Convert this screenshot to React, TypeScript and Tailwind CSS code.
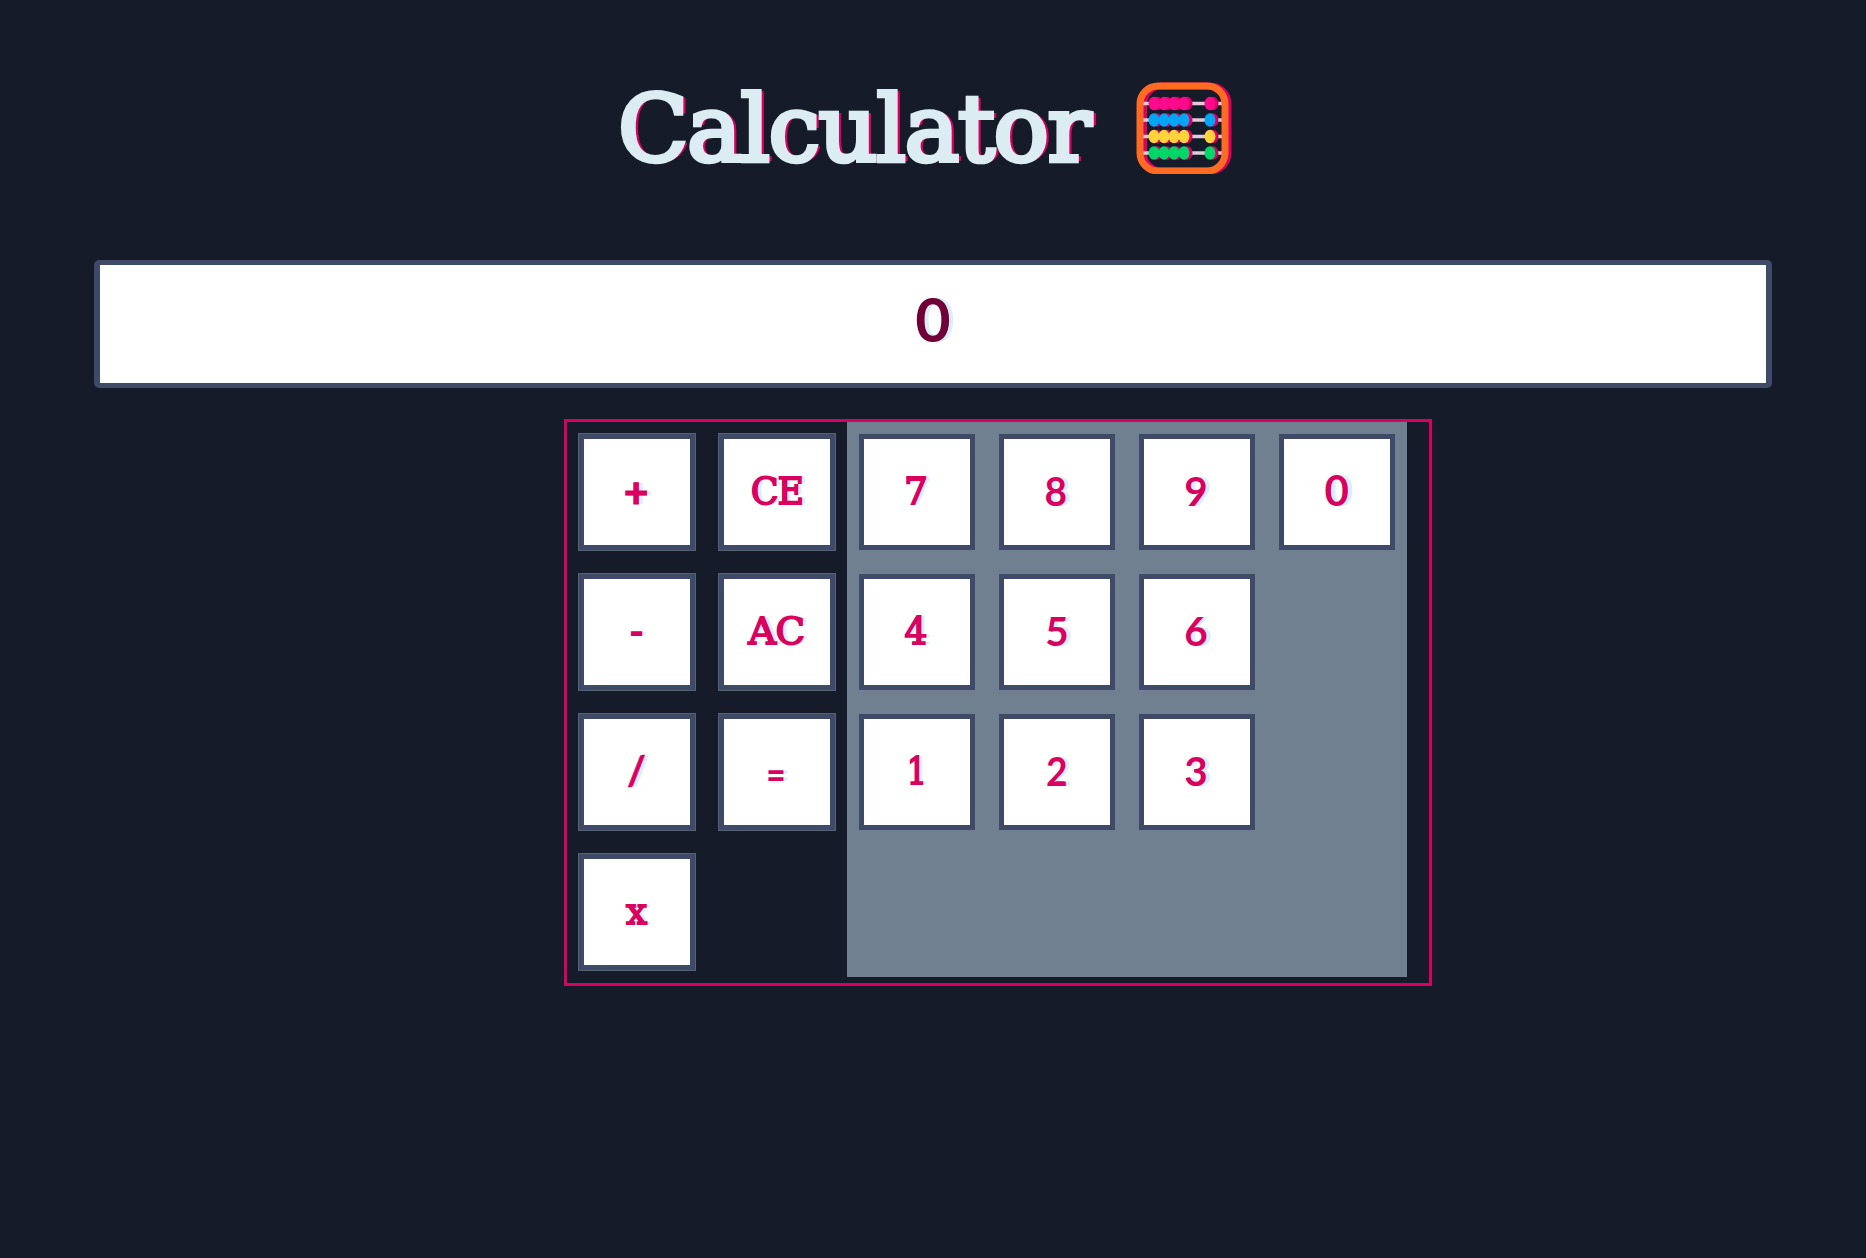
const SERIF = "font-['DejaVu_Serif',serif] text-[37.5px] [-webkit-text-stroke:1.8px_#da0060]";
const SANS = "font-['Lato',sans-serif] text-[40.5px] font-bold";

type Key = { label: string; look: string };

const operators: Key[] = [
  { label: '+', look: "font-['Lato',sans-serif] text-[42px] font-black -translate-y-px scale-x-[1.02] [-webkit-text-stroke:0.8px_#da0060]" },
  { label: 'CE', look: `${SERIF} tracking-[-1.2px] scale-x-[0.97]` },
  { label: '-', look: SERIF },
  { label: 'AC', look: `${SERIF} tracking-[-0.6px] scale-x-[1.03]` },
  { label: '/', look: `${SANS} -translate-y-[2px] [-webkit-text-stroke:0.6px_#da0060]` },
  { label: '=', look: "font-['Lato',sans-serif] text-[38px] font-black scale-x-[0.88] translate-y-px" },
  { label: 'x', look: SERIF },
];

const digits: Key[] = [
  { label: '7', look: `${SERIF} -translate-x-px` },
  { label: '8', look: `${SANS} -translate-x-px -translate-y-px scale-x-[0.96]` },
  { label: '9', look: `${SANS} -translate-x-px -translate-y-px` },
  { label: '0', look: `${SANS} -translate-y-px scale-x-[1.04] scale-y-[1.02]` },
  { label: '4', look: `${SERIF} -translate-x-px scale-x-[0.96]` },
  { label: '5', look: `${SANS} -translate-y-px` },
  { label: '6', look: `${SANS} -translate-x-px -translate-y-px` },
  { label: '1', look: `${SERIF} scale-x-[0.85]` },
  { label: '2', look: `${SANS} -translate-y-px scale-x-[0.92]` },
  { label: '3', look: `${SANS} -translate-x-px -translate-y-px` },
];

function KeyButton({ label, look }: Key) {
  return (
    <button className="flex h-[118px] w-[118px] items-center justify-center border border-[#708090]/70 bg-[#3f4a68] bg-clip-padding p-[5px]">
      <span className="flex h-full w-full items-center justify-center bg-white leading-none text-[#da0060] [text-shadow:4px_0_0_#dceef5]">
        <span className={look}>{label}</span>
      </span>
    </button>
  );
}

function Abacus() {
  const rows = [
    { y: 21.5, color: '#ff0a8d' },
    { y: 38, color: '#00a5f5' },
    { y: 54.5, color: '#ffd43b' },
    { y: 71, color: '#00d768' },
  ];
  return (
    <svg className="h-[92px] w-[96px]" viewBox="0 0 96 92">
      <rect x="7.5" y="4" width="84.5" height="85" rx="18" fill="none" stroke="#da0060" strokeWidth="7" />
      {rows.map((r) => (
        <g key={r.y}>
          <path d={`M7 ${r.y}H86`} stroke="#e0cbd6" strokeWidth="3.5" />
          {[18, 28, 38, 48, 74].map((x) => (
            <ellipse key={x} cx={x + 3} cy={r.y} rx="5.5" ry="6.7" fill="#da0060" />
          ))}
          {[18, 28, 38, 48, 74].map((x) => (
            <ellipse key={x} cx={x} cy={r.y} rx="5.5" ry="6.7" fill={r.color} />
          ))}
        </g>
      ))}
      <rect x="4" y="4" width="85" height="85" rx="18" fill="none" stroke="#ff6b22" strokeWidth="7" />
    </svg>
  );
}

export default function App() {
  return (
    <main className="flex h-[1258px] w-[1866px] flex-col overflow-hidden bg-[#151b28]">
      <h1 className="ml-[618px] mt-[82px] flex h-[92px] items-center">
        <span className="w-[518px] translate-y-[1.5px] whitespace-nowrap font-['DejaVu_Serif',serif] text-[92px] leading-[92px] tracking-[-1.4px] text-[#dcecf3] [-webkit-text-stroke:4.5px_#dcecf3] [text-shadow:4.5px_0_0_#da0060]">
          Calculator
        </span>
        <Abacus />
      </h1>
      <output className="ml-[94px] mt-[86px] flex h-[128px] w-[1678px] items-center justify-center rounded-[5px] border-x-[6px] border-y-[5px] border-[#3f4a68] bg-white pb-[11px] font-['Lato',sans-serif] text-[61px] font-bold leading-none text-[#720038] [text-shadow:4px_0_0_#dceef5]">
        0
      </output>
      <section className="ml-[564px] mt-[31px] flex h-[567px] w-[868px] border-[3px] border-[#da0060]">
        <div className="grid h-[561px] w-[280px] grid-cols-[118px_118px] content-start gap-x-[22px] gap-y-[22px] pl-[10.5px] pt-[11px]">
          {operators.map((k) => (
            <KeyButton key={k.label} {...k} />
          ))}
        </div>
        <div className="grid h-[555px] w-[560px] grid-cols-[118px_118px_118px_118px] content-start gap-x-[22px] gap-y-[22px] bg-[#708090] pl-[11px] pt-[11px]">
          {digits.map((k) => (
            <div key={k.label} className={k.label === '4' || k.label === '1' ? 'col-start-1' : ''}>
              <KeyButton {...k} />
            </div>
          ))}
        </div>
      </section>
    </main>
  );
}
